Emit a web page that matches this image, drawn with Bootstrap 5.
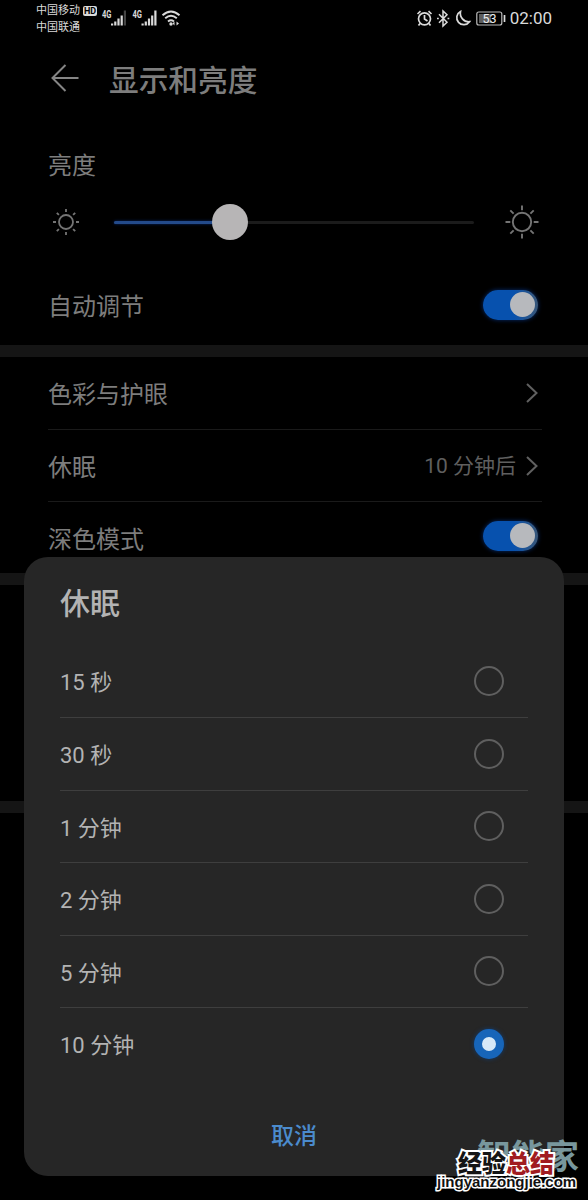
<!DOCTYPE html>
<html lang="zh-CN">
<head>
<meta charset="utf-8">
<meta name="viewport" content="width=device-width, initial-scale=1">
<title>显示和亮度</title>
<link href="https://cdn.jsdelivr.net/npm/bootstrap@5.3.0/dist/css/bootstrap.min.css" rel="stylesheet">
<style>
body{background:#000;color:#7d7d7d;font-family:Roboto,"Noto Sans CJK SC",sans-serif;font-size:24px;line-height:1}
.phone{width:588px;height:1200px;overflow:hidden;background:#000}
svg{display:block;flex:none}
.statusbar{height:37px;padding:0 36px;color:#dadada}
.carrier{font-size:11px;line-height:16.5px;padding-top:3px}
.hd{font:bold 9px/10px Roboto,sans-serif;background:#dadada;color:#000;border-radius:2px;width:14px;height:10px;text-align:center;margin-left:3px;letter-spacing:-.2px}
.clock{font-size:17px}
.apphead{height:83px;padding:0 52px 0 51px}
.apphead h1{font-size:29.7px;font-weight:500;line-height:1;margin:0 0 0 29px;padding-top:5px}
.bright{height:90px;padding:34px 48px 0}
.sliderrow{height:24px;padding:0 48px}
.track{height:3px;background:#1b1b1b;width:360px;border-radius:2px}
.fill{height:3px;background:#234a8a;border-radius:2px;box-shadow:0 0 3px #06266a}
.knob{width:36px;height:36px;border-radius:50%;background:#b7b5b6;top:-17px;left:98px}
.auto{height:111px;padding:30px 50.5px 0 48px}
.auto>span{padding-top:4px}
.band{height:12px;background:#151515}
.cell{height:72px;margin:0 46px 0 48px;padding-right:4.5px}
.cell>span{padding-top:4px}
.cell+.cell{border-top:1px solid #1a1a1a}
.cell>.value{font-size:21px;color:#5f5f5f;margin-right:9.5px;padding-top:1px}
.toggle{width:55px;height:30px;border-radius:15px;background:linear-gradient(90deg,#0751ae 55%,#385678);padding:2.5px;box-shadow:0 0 4px #062c70}
.toggle i{width:25px;height:25px;border-radius:50%;background:#b7b9bd}
.sheet{left:24px;top:557px;width:540px;height:619px;border-radius:24px;background:#262626;color:#b3b3b3;padding:0 36px}
.sheet h2{height:87.5px;font-size:30px;font-weight:500;line-height:1;margin:0;padding-top:32px}
.choice{height:72.5px;font-size:22px;padding-right:24px}
.choice>span:first-child{padding-top:5px}
.choice+.choice{border-top:1px solid #3e3e3e}
.dot{width:30px;height:30px;border:2px solid #5f5f5f;border-radius:50%}
.dot.on{border:8px solid #1765b9;background:#d7e9f8;box-shadow:0 0 4px #123c70}
.cancel{height:96px;padding-top:45px;color:#4b8bcd;font-size:23px;font-weight:500}
.wm{right:6px;bottom:0;width:150px;height:62px}
.wm span{position:absolute;white-space:nowrap}
.wm-a{left:45px;top:-3px;font:bold 34px/40px "Noto Sans CJK SC",sans-serif;color:#78979d}
.wm-b{left:26px;top:11px;font:900 24px/26px "Noto Sans CJK SC",sans-serif;color:#151515;-webkit-text-stroke:4px #fff;paint-order:stroke fill}
.wm-b b{color:#a11c21;font-weight:900}
.wm-c{left:5px;top:34px;font:bold 15px/20px "Liberation Sans",sans-serif;color:#111;-webkit-text-stroke:3px #fff;paint-order:stroke fill}
</style>
</head>
<body>
<div class="phone position-relative">
  <header class="statusbar d-flex justify-content-between">
    <div class="d-flex">
      <div class="carrier"><div class="d-flex align-items-center"><span>中国移动</span><span class="hd">HD</span></div><div>中国联通</div></div>
      <svg width="84" height="37" fill="#dadada"><g font-family="Roboto" font-weight="bold" font-size="10"><text x="5" y="18" textLength="9.500" lengthAdjust="spacingAndGlyphs">4G</text><text x="35.500" y="18" textLength="9.500" lengthAdjust="spacingAndGlyphs">4G</text></g>
        <g transform="translate(1 0)"><path d="M13 23.500h2.200v2H13zM16.200 21.500h2.200v4h-2.200zM19.400 18.500h2.200v7h-2.200zM22.600 15.500h2.200v10h-2.200zM43.500 23.500h2.200v2h-2.200zM46.700 21.500h2.200v4h-2.200zM49.900 18.500h2.200v7h-2.200zM53.100 15.500h2.200v10h-2.200zM56.300 10.500h2.200v15h-2.200z"/><path fill="#444" d="M25.800 10.500H28v15h-2.200z"/>
        <g fill="none" stroke="#dadada" stroke-width="1.900"><path d="M64.500 15.200q8.500-7.600 17 0M67.200 18.300q5.800-5 11.600 0M70 21.400q3-2.400 6 0"/></g><circle cx="73" cy="24" r="1.700"/><path d="M76.500 21.500v4l-2-2zM78.500 21.500v4l2.500-2z"/></g></svg>
    </div>
    <div class="d-flex align-items-center">
      <svg width="94" height="37" fill="none" stroke="#dadada" stroke-width="1.700"><g transform="translate(-1 0)"><circle cx="9.500" cy="18.800" r="6"/><path d="M9.500 15v4l3 2M2.500 14l3-2.800M16.500 14l-3-2.800M5 23.500l-1.500 2M14 23.500l1.500 2"/><path d="M24 14.200l8 8-4 3.800V11l4 3.800-8 8" stroke-width="1.500"/><path d="M22 18.500h1.800M32.500 18.500h1.800"/><path d="M45.500 11.500a7 7 0 1 0 9 10.200a8.500 8.500 0 0 1-9-10.200z"/></g><rect x="60.800" y="12" width="25" height="13" rx="2" stroke="#bbb" stroke-width="1.200"/><path d="M63 14h12v9H63z" fill="#5d5d5d" stroke="none"/><path d="M88.500 15v7"/><text x="66.500" y="23" fill="#eee" stroke="none" font-family="Roboto" font-size="12.500">53</text></svg>
      <span class="clock">02:00</span>
    </div>
  </header>
  <div class="apphead d-flex align-items-center">
    <svg width="29" height="30" fill="none" stroke="#858585" stroke-width="2"><path d="M27.500 14H2M14.500 1L1.500 14l13 13"/></svg>
    <h1>显示和亮度</h1>
  </div>
  <div class="bright">亮度</div>
  <div class="sliderrow d-flex align-items-center justify-content-between">
    <svg width="36" height="36" viewBox="-18 -18 36 36" fill="none" stroke="#747474" stroke-width="1.800"><circle r="7"/><path d="M0-13v3M0 13v-3M-13 0h3M13 0h-3M-9.200-9.200l2.100 2.100M9.200-9.200l-2.100 2.100M-9.200 9.200l2.100-2.100M9.200 9.200l-2.100-2.100"/></svg>
    <div class="track position-relative"><div class="fill" style="width:32%"></div><div class="knob position-absolute"></div></div>
    <svg width="36" height="36" viewBox="-18 -18 36 36" fill="none" stroke="#747474" stroke-width="1.900"><circle r="9.200"/><path d="M0-16.500v4.800M0 16.500v-4.800M-16.500 0h4.800M16.500 0h-4.800M-11.700-11.700l3.300 3.300M11.700-11.700l-3.300 3.300M-11.700 11.700l3.300-3.300M11.700 11.700l-3.300-3.300"/></svg>
  </div>
  <div class="auto d-flex align-items-center justify-content-between"><span>自动调节</span><div class="toggle d-flex justify-content-end"><i></i></div></div>
  <div class="band"></div>
  <div class="cell d-flex align-items-center justify-content-between"><span>色彩与护眼</span><svg width="12" height="20" fill="none" stroke="#606060" stroke-width="2"><path d="M1 1l9.500 9L1 19"/></svg></div>
  <div class="cell d-flex align-items-center"><span class="me-auto">休眠</span><span class="value">10 分钟后</span><svg width="12" height="20" fill="none" stroke="#606060" stroke-width="2"><path d="M1 1l9.500 9L1 19"/></svg></div>
  <div class="cell d-flex align-items-center justify-content-between"><span>深色模式</span><div class="toggle d-flex justify-content-end mb-1"><i></i></div></div>
  <div class="band"></div>
  <div style="height:216px"></div>
  <div class="band"></div>

  <section class="sheet position-absolute">
    <h2>休眠</h2>
    <div class="choice d-flex align-items-center justify-content-between"><span>15 秒</span><span class="dot"></span></div>
    <div class="choice d-flex align-items-center justify-content-between"><span>30 秒</span><span class="dot"></span></div>
    <div class="choice d-flex align-items-center justify-content-between"><span>1 分钟</span><span class="dot"></span></div>
    <div class="choice d-flex align-items-center justify-content-between"><span>2 分钟</span><span class="dot"></span></div>
    <div class="choice d-flex align-items-center justify-content-between"><span>5 分钟</span><span class="dot"></span></div>
    <div class="choice d-flex align-items-center justify-content-between"><span>10 分钟</span><span class="dot on"></span></div>
    <div class="cancel text-center">取消</div>
  </section>
  <div class="wm position-absolute"><span class="wm-a">智能家</span><span class="wm-b">经验<b>总结</b></span><span class="wm-c">jingyanzongjie.com</span></div>
</div>
<script src="https://cdn.jsdelivr.net/npm/bootstrap@5.3.0/dist/js/bootstrap.bundle.min.js"></script>
</body>
</html>
